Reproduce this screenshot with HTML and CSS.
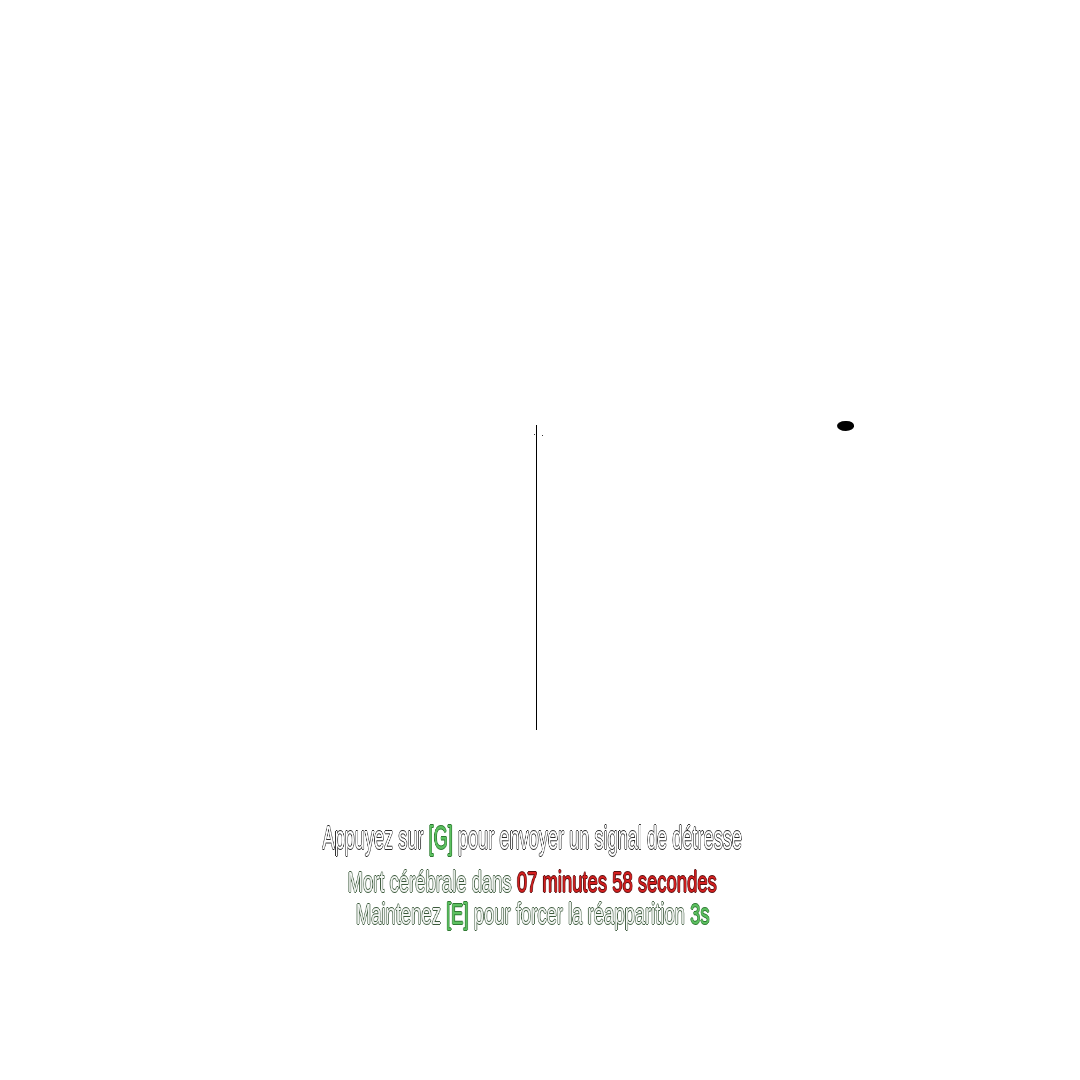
FILE: index.html
```html
<!DOCTYPE html>
<html lang="fr">
<head>
<meta charset="utf-8">
<title>Signal de détresse</title>
<link rel="stylesheet" href="styles.css">
</head>
<body>
<div class="screen">
  <div class="scene">
    <div class="pole"></div>
    <div class="dot dot-a"></div>
    <div class="dot dot-b"></div>
    <div class="blob"></div>
  </div>
  <div class="hud">
    <div class="line line-main"><span class="txt">Appuyez sur <span class="key">[G]</span> pour envoyer un signal de détresse</span></div>
    <div class="line line-death"><span class="txt">Mort cérébrale dans <span class="timer">07 minutes 58 secondes</span></span></div>
    <div class="line line-respawn"><span class="txt">Maintenez <span class="key">[E]</span> pour forcer la réapparition <span class="key">3s</span></span></div>
  </div>
</div>
</body>
</html>
```
FILE: styles.css
```css
html, body {
  margin: 0;
  padding: 0;
  background: #ffffff;
}
.screen {
  width: 1080px;
  height: 1080px;
  position: relative;
  overflow: hidden;
  display: flex;
  flex-direction: column;
  align-items: center;
}
.scene {
  position: relative;
  width: 1080px;
  height: 810px;
  flex: none;
}
.pole {
  position: absolute;
  left: 536px;
  top: 425px;
  width: 1px;
  height: 305px;
  background: #000;
}
.dot {
  position: absolute;
  width: 1px;
  height: 1px;
  background: #333;
}
.dot-a { left: 534px; top: 434px; }
.dot-b { left: 542px; top: 435px; }
.blob {
  position: absolute;
  left: 837px;
  top: 421px;
  width: 17px;
  height: 10px;
  border-radius: 50% 45% 50% 55%;
  background: #000;
}
.hud {
  display: flex;
  flex-direction: column;
  align-items: center;
  width: 100%;
  box-sizing: border-box;
  padding-right: 15px;
  font-family: "Liberation Sans", "DejaVu Sans", sans-serif;
  -webkit-font-smoothing: antialiased;
}
.line {
  display: flex;
  justify-content: center;
  width: 100%;
  white-space: nowrap;
}
.txt {
  display: inline-block;
  color: #ffffff;
  will-change: transform;
}
.line-main {
  font-size: 34px;
  line-height: 40px;
  margin-top: 7px;
}
.line-main .txt {
  transform: scaleX(0.535);
  text-shadow: 1px 0 0 #2b2b2b, -1px 0 0 #2b2b2b, 0 1px 0 #2b2b2b, 0 -1px 0 #2b2b2b;
}
.line-death {
  font-size: 30px;
  line-height: 32px;
  margin-top: 9px;
}
.line-respawn {
  font-size: 30px;
  line-height: 32px;
}
.line-death .txt, .line-respawn .txt {
  transform: scaleX(0.615);
  color: #f4f6f4;
  text-shadow: 1px 0 0 #3c5a3c, -1px 0 0 #3c5a3c, 0 1px 0 #3c5a3c, 0 -1px 0 #3c5a3c;
}
.line .key {
  color: #5cc060;
  text-shadow: 1px 0 0 #2f7a33, -1px 0 0 #2f7a33, 0 1px 0 #2f7a33, 0 -1px 0 #2f7a33;
}
.line .timer {
  color: #d42020;
  text-shadow: 1px 0 0 #5a0f0f, -1px 0 0 #5a0f0f, 0 1px 0 #5a0f0f, 0 -1px 0 #5a0f0f;
}
```
